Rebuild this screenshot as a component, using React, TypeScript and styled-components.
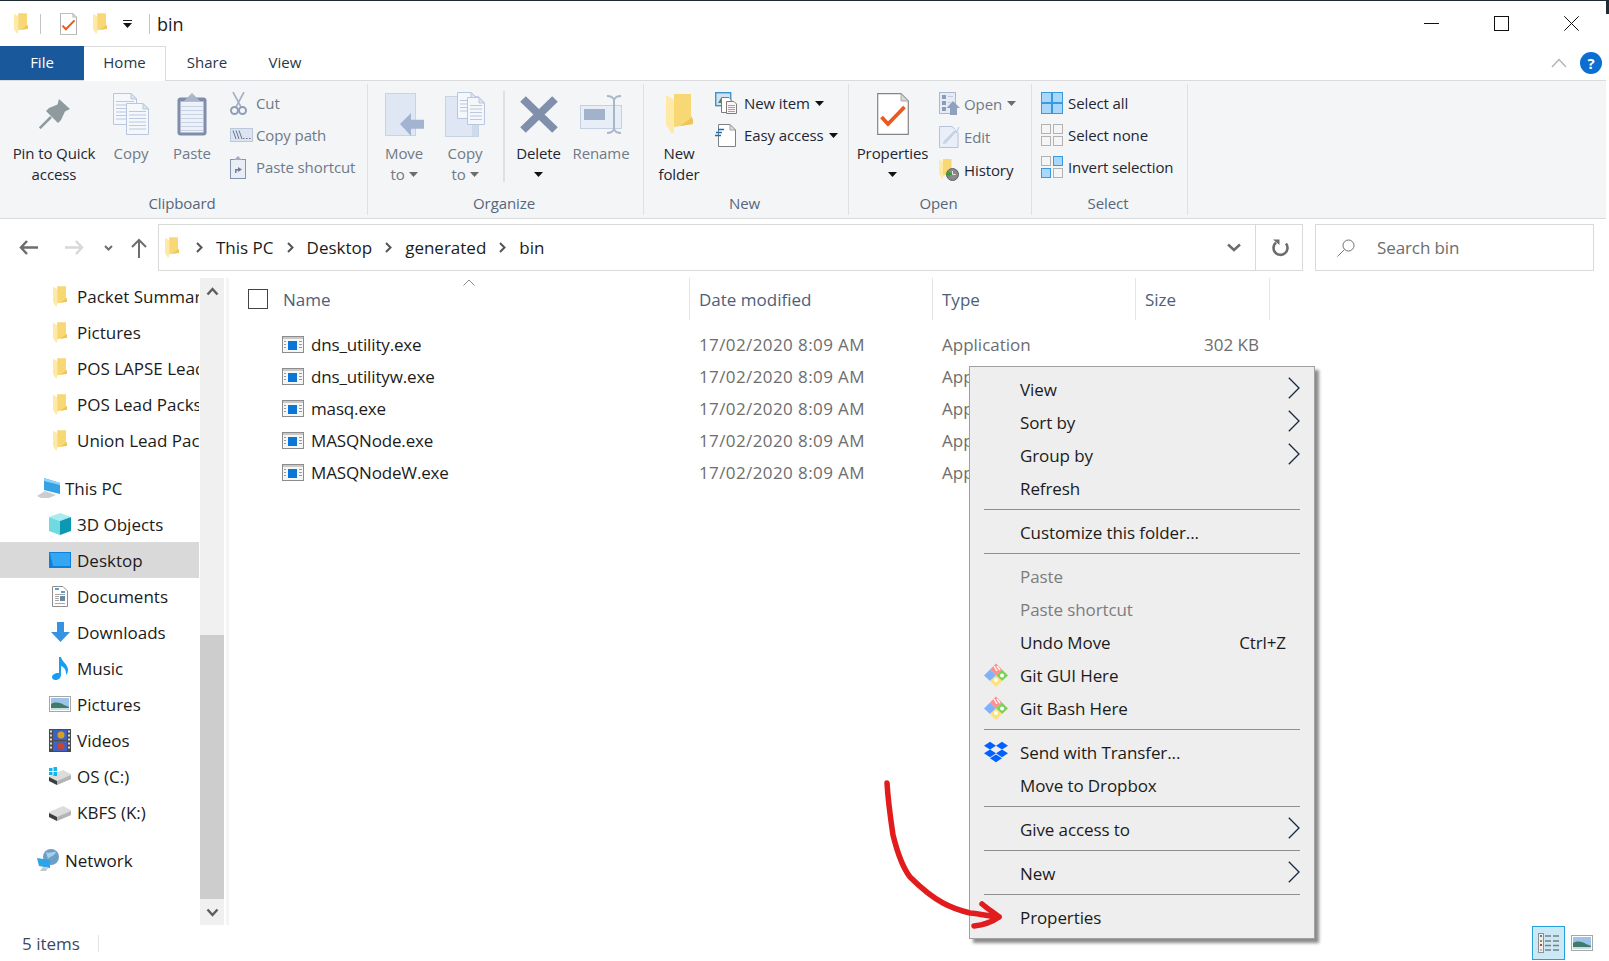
import React, { FC, ReactNode } from "react";
import styled, { createGlobalStyle } from "styled-components";
import { FaDropbox } from "react-icons/fa";

const GlobalStyle = createGlobalStyle`
  html, body {
    margin: 0;
    padding: 0;
    background: #fff;
  }
  body {
    font-family: "Open Sans", "Noto Sans", sans-serif;
    color: #1b1b1b;
    overflow: hidden;
  }
  svg {
    display: block;
    flex: none;
  }
`;

/* ---------- icons ---------- */

const Svg: FC<{ w: number; h: number; vb?: string; children: ReactNode }> = ({ w, h, vb, children }) => (
  <svg width={w} height={h} viewBox={vb || `0 0 ${w} ${h}`} fill="none">
    {children}
  </svg>
);

const Folder: FC<{ w?: number; h?: number }> = ({ w = 14, h = 21 }) => (
  <Svg w={w} h={h} vb="0 0 27 40">
    <path d="M8 0H25V22L27 26V30L8 33Z" fill="#f8d775" />
    <path d="M25 22L27 26V30L14 32L25 24Z" fill="#edc659" />
    <path d="M0 1L8 6V38L6 40L2 34L0 30Z" fill="#ffe9a6" />
  </Svg>
);

const PropsDoc: FC<{ w?: number; h?: number }> = ({ w = 32, h = 42 }) => (
  <Svg w={w} h={h} vb="0 0 32 42">
    <path d="M.7.7H24L31.3 8V41.3H.7Z" fill="#fff" stroke="#858585" strokeWidth="1.2" />
    <path d="M24 .7V8H31.3Z" fill="#d8d8d8" stroke="#a8a8a8" />
    <path d="M4.500 24L11 31L27.500 14" stroke="#ea5a1e" strokeWidth="3.800" />
  </Svg>
);

const PageLines: FC<{ x: number; y: number; w: number; h: number }> = ({ x, y, w, h }) => (
  <g>
    <path d={`M${x + .5} ${y + .5}H${x + w - 6}L${x + w - .5} ${y + 6}V${y + h - .5}H${x + .5}Z`} fill="#f4f7fc" stroke="#b9c6dd" />
    <path d={`M${x + w - 6} ${y + .5}V${y + 6}H${x + w - .5}Z`} fill="#dfe6f2" stroke="#b9c6dd" />
    {Array.from({ length: Math.floor((h - 10) / 3.500) }).map((_, i) => (
      <path key={i} d={`M${x + 3} ${y + 8.500 + i * 3.500}H${x + w - 3}`} stroke="#bcc8de" />
    ))}
  </g>
);

const CopyIcon = () => (
  <Svg w={36} h={42}>
    <PageLines x={0} y={0} w={24} h={32} />
    <PageLines x={13} y={10} w={23} h={32} />
  </Svg>
);

const PasteIcon = () => (
  <Svg w={30} h={43}>
    <rect x=".5" y="4.500" width="29" height="38" rx="3" fill="#7f8cab" />
    <rect x="3.500" y="8.500" width="23" height="31" fill="#eef1f8" />
    {[13, 17, 21, 25, 29, 33, 37].map((y) => (
      <path key={y} d={`M4 ${y}.5H26`} stroke="#c8d2e5" />
    ))}
    <path d="M15 0L23 8H7Z" fill="#aab5ca" />
  </Svg>
);

const CutIcon = () => (
  <Svg w={17} h={23}>
    <path d="M3 0L11 15M14 0L6 15" stroke="#a3afc6" strokeWidth="1.600" />
    <circle cx="4.500" cy="18.500" r="3.500" stroke="#8f9db8" strokeWidth="2" />
    <circle cx="12.500" cy="18.500" r="3.500" stroke="#8f9db8" strokeWidth="2" />
  </Svg>
);

const CopyPathIcon = () => (
  <Svg w={23} h={14}>
    <rect x=".5" y=".5" width="22" height="13" fill="#dbe4f0" stroke="#bcc7d9" />
    <path d="M3 2.500L6 11M6 2.500L9 11M9 2.500L12 11" stroke="#66778e" />
    <path d="M13 10.500h1.500M16 10.500h1.500M19 10.500h1.500" stroke="#66778e" />
  </Svg>
);

const PasteShortcutIcon = () => (
  <Svg w={16} h={23}>
    <rect x=".5" y="3.500" width="15" height="19" fill="#e8edf6" stroke="#8593ae" />
    <path d="M8 0L12 4H4Z" fill="#a4afc4" />
    <path d="M5 17V13H8V11L12 13.500L8 16V14.500H6.500V17Z" fill="#6e7f9b" />
  </Svg>
);

const PinIcon = () => (
  <Svg w={31} h={30}>
    <path d="M20 0L31 10L26 12.500L22 21L19 24L7 12L10 9L18.500 5.500Z" fill="#8e9a9e" />
    <path d="M12 18L.8 29.200" stroke="#8e9a9e" strokeWidth="2.500" />
  </Svg>
);

const MoveIcon = () => (
  <Svg w={39} h={43}>
    <rect x=".5" y=".5" width="30" height="42" fill="#dfe7f4" stroke="#c7d3e6" />
    <path d="M15 31L26 20V26.700H39V35.700H26V43Z" fill="#a2b4d0" />
  </Svg>
);

const CopyToIcon = () => (
  <Svg w={40} h={45}>
    <rect x=".5" y="4.500" width="33" height="40" fill="#dfe7f4" stroke="#c7d3e6" />
    <rect x="27" y="5" width="6" height="39" fill="#cfdaeb" />
    <PageLines x={12} y={0} w={20} h={27} />
    <PageLines x={22} y={5} w={18} h={28} />
  </Svg>
);

const DeleteIcon = () => (
  <Svg w={38} h={37}>
    <path d="M3 3L35 34M35 3L3 34" stroke="#7f8fac" strokeWidth="8" />
  </Svg>
);

const RenameIcon = () => (
  <Svg w={42} h={39}>
    <rect x=".5" y="10.500" width="41" height="23" fill="#e8eef7" stroke="#c5d1e3" />
    <rect x="4" y="14" width="21" height="11" fill="#a3b2cb" />
    <path d="M27 1C31 1 33 2 34 5V34C33 37 31 38 27 38M41 1C37 1 35 2 34 5M34 34C35 37 37 38 41 38" stroke="#a9b6ca" strokeWidth="2" />
  </Svg>
);

const NewItemIcon = () => (
  <Svg w={22} h={22}>
    <rect x=".7" y=".7" width="15" height="13" fill="#cfe3f2" stroke="#3f92cc" strokeWidth="1.400" />
    <path d="M3 11L6 6L9 11Z" fill="#5f7d5a" />
    <path d="M6.500 5.500H14L16 7.500V20.500H6.500Z" fill="#fff" stroke="#7d7d7d" />
    <path d="M11.500 9.500H19L21.500 12V21.500H11.500Z" fill="#fbf5f6" stroke="#7d7d7d" />
    {[13, 15, 17, 19].map((y) => (
      <path key={y} d={`M13 ${y}.5H20`} stroke="#8fa3cf" />
    ))}
  </Svg>
);

const EasyAccessIcon = () => (
  <Svg w={21} h={23}>
    <path d="M3.500.5H15L20.500 6V22.500H3.500Z" fill="#fff" stroke="#808080" />
    <path d="M15 .5V6H20.500Z" fill="#ddd" stroke="#a0a0a0" />
    <path d="M3 5.500H9M1 8.500H7M0 11.500H6" stroke="#1c6fb5" strokeWidth="1.300" />
  </Svg>
);

const OpenIcon = () => (
  <Svg w={21} h={23}>
    <rect x=".5" y=".5" width="16" height="21" fill="#e6ecf6" stroke="#aab8cf" />
    <rect x="3" y="3" width="4" height="4" fill="#8c9cb6" />
    <rect x="3" y="9" width="4" height="4" fill="#8c9cb6" />
    <rect x="3" y="15" width="4" height="4" fill="#8c9cb6" />
    <path d="M9 4.500H14M9 10.500H12" stroke="#c0cbdd" />
    <path d="M14 9L21 16H18V23H11V16H7.500Z" fill="#8fa2bd" />
  </Svg>
);

const EditIcon = () => (
  <Svg w={21} h={22}>
    <path d="M.5.5H13L19 6V21.500H.5Z" fill="#e9eff8" stroke="#b5c2d8" />
    <path d="M3 19L4 15L16 3L19 5L7 18Z" fill="#c9d4e6" stroke="#fff" strokeWidth=".6" />
    <path d="M20 1L17 7" stroke="#b5c2d8" />
  </Svg>
);

const HistoryIcon = () => (
  <Svg w={20} h={22}>
    <g transform="scale(.5)">
      <path d="M8 0H25V22L27 26V30L8 33Z" fill="#f8d775" />
      <path d="M0 1L8 6V38L6 40L2 34L0 30Z" fill="#ffe9a6" />
    </g>
    <circle cx="13.500" cy="15.500" r="6" fill="#8a8a8a" stroke="#5f5f5f" />
    <path d="M13.500 12V15.500H16.500" stroke="#e5e5e5" />
    <path d="M11 12L6.500 15L11 18V16H13V14H11Z" fill="#2ea42e" />
  </Svg>
);

const Panes: FC<{ on: boolean[] }> = ({ on }) => (
  <Svg w={22} h={22}>
    {[
      [0, 0],
      [12, 0],
      [0, 12],
      [12, 12],
    ].map(([x, y], i) => (
      <rect
        key={i}
        x={x + 0.5}
        y={y + 0.5}
        width={9}
        height={9}
        fill={on[i] ? "#a9d8fb" : "#f5f5f5"}
        stroke={on[i] ? "#3a98de" : "#b2b2b2"}
      />
    ))}
  </Svg>
);

const SelectAllIcon = () => (
  <Svg w={22} h={22}>
    <rect x=".5" y=".5" width="21" height="21" fill="#a9d8fb" stroke="#3a98de" />
    <path d="M11 0V22M0 11H22" stroke="#3a98de" strokeWidth="2" />
  </Svg>
);

const Caret: FC<{ muted?: boolean }> = ({ muted }) => (
  <Svg w={9} h={5}>
    <path d="M0 0H9L4.500 5Z" fill={muted ? "#6d6d6d" : "#111"} />
  </Svg>
);

const ExeIcon = () => (
  <Svg w={22} h={17}>
    <rect x=".5" y=".5" width="21" height="16" fill="#f6f6f6" stroke="#8c8c8c" />
    <rect x="1" y="1" width="20" height="2" fill="#c9c9c9" />
    <rect x="6" y="5" width="9" height="9" fill="#0a76d6" />
    <path d="M2 5.500H4M2 8.500H4M2 11.500H4M17 5.500H20M17 8.500H20M17 11.500H20" stroke="#8f9aa6" />
  </Svg>
);

const DriveBase = () => (
  <g>
    <path d="M0 9L14 3L22 7V12L8 18L0 14Z" fill="#dcdcdc" />
    <path d="M0 10L8 14V18L0 14Z" fill="#3e3e3e" />
    <path d="M8 14L22 8V12L8 18Z" fill="#b4b4b4" />
  </g>
);

const NavIcons: Record<string, ReactNode> = {
  folder: <Folder />,
  pc: (
    <Svg w={23} h={20}>
      <path d="M7 0L23 5V16L7 12Z" fill="#35a2e6" />
      <path d="M7 0L23 5V7L7 3Z" fill="#8ed3f8" />
      <path d="M0 18L8 13L19 17L12 20H4Z" fill="#c8ced4" />
    </Svg>
  ),
  cube: (
    <Svg w={22} h={22}>
      <path d="M11 0L22 4L11 8L0 4Z" fill="#a8ecf2" />
      <path d="M0 4L11 8V22L0 18Z" fill="#6fdadf" />
      <path d="M22 4L11 8V22L22 18Z" fill="#0c98b2" />
    </Svg>
  ),
  desktop: (
    <Svg w={22} h={16}>
      <rect width="22" height="16" fill="#0f7fd8" />
      <path d="M1 1H21V14H4Z" fill="#35a6f2" />
    </Svg>
  ),
  docs: (
    <Svg w={16} h={21}>
      <path d="M.5.5H11L15.500 5V20.500H.5Z" fill="#fff" stroke="#8f8f8f" />
      <path d="M3 3H7M9 6H13" stroke="#2a7fc9" strokeWidth="1.500" />
      <path d="M3 8.500H13M3 17.500H13" stroke="#a8a8a8" />
      <rect x="8" y="10" width="5" height="5" fill="#6c879c" />
      <path d="M3 10.500H7M3 12.500H7M3 14.500H7" stroke="#a8a8a8" />
    </Svg>
  ),
  down: (
    <Svg w={19} h={20}>
      <path d="M6 0H13V10H19L9.500 20L0 10H6Z" fill="#3593e4" />
    </Svg>
  ),
  music: (
    <Svg w={17} h={23}>
      <path d="M7 0H9C10 5 16 7 16 13C16 15 15 17 14 18C14.500 13 12 10 9 9V18C9 21 6 23 3.500 23C1.500 23 0 22 0 20C0 17.500 4 15.500 7 16Z" fill="#1a9df0" />
    </Svg>
  ),
  pictures: (
    <Svg w={22} h={16}>
      <rect x=".5" y=".5" width="21" height="15" fill="#fff" stroke="#a6a6a6" />
      <rect x="2" y="2" width="18" height="12" fill="#9cc4e8" />
      <path d="M2 8C7 5 12 7 15 9L20 11V14H2Z" fill="#3f7a6a" />
      <path d="M2 12H20V14H2Z" fill="#c8dde4" />
    </Svg>
  ),
  videos: (
    <Svg w={22} h={23}>
      <rect width="22" height="23" fill="#4a4a4a" />
      <rect x="4" y="1" width="14" height="10" fill="#3d62c6" />
      <rect x="4" y="12" width="14" height="10" fill="#3d62c6" />
      <circle cx="12" cy="6" r="3.500" fill="#d8a01e" />
      <circle cx="12" cy="17" r="3.500" fill="#c9442e" />
      <path d="M1 2.500H3M1 6.500H3M1 10.500H3M1 14.500H3M1 18.500H3M19 2.500H21M19 6.500H21M19 10.500H21M19 14.500H21M19 18.500H21" stroke="#ddd" strokeWidth="2" />
    </Svg>
  ),
  os: (
    <Svg w={22} h={18}>
      <DriveBase />
      <path d="M0 1H3.500V4H0ZM4.500 0H8V4H4.500ZM0 5H3.500V8H0ZM4.500 5H8V9H4.500Z" fill="#12b4ef" />
    </Svg>
  ),
  drive: (
    <Svg w={22} h={18}>
      <DriveBase />
    </Svg>
  ),
  network: (
    <Svg w={23} h={22}>
      <circle cx="14" cy="8" r="8" fill="#6a9fc6" />
      <path d="M9 3C12 5 16 2 19 3C17 8 13 7 11 10Z" fill="#a8cfe8" />
      <path d="M0 9L13 11V19L2 17Z" fill="#2ea3e8" />
      <path d="M3 22L6 18L11 19L9 22Z" fill="#bfc7cf" />
    </Svg>
  ),
};

const GitIcon = () => (
  <Svg w={24} h={24}>
    <path d="M12 .5L18 6.500L12 12.500L6 6.500Z" fill="#ff8f8f" />
    <path d="M6 6.500L12 12.500L6 18L0 12.500Z" fill="#7fb2fb" />
    <path d="M18 6.500L24 12.500L18 18L12 12.500Z" fill="#7fd05a" />
    <path d="M12 12.500L18 18L12 24L6 18Z" fill="#fde27a" />
    <path d="M10 3L13 8M13 3L16 7" stroke="#fff" strokeWidth="1.400" />
    <circle cx="18" cy="12.500" r="2" fill="#fff" />
    <circle cx="12" cy="17" r="2" fill="#fff" />
  </Svg>
);

const SubChevron = () => (
  <Svg w={12} h={22}>
    <path d="M.8.8L11 11L.8 21.200" stroke="#16283c" strokeWidth="1.300" />
  </Svg>
);

const Crumb = () => (
  <Svg w={7} h={11}>
    <path d="M1 1L5.500 5.500L1 10" stroke="#555" strokeWidth="2" />
  </Svg>
);

/* ---------- title bar ---------- */

const Page = styled.div`
  position: relative;
  width: 1609px;
  height: 961px;
  display: flex;
  overflow: hidden;
`;

const Edge = styled.div`
  width: 3px;
  &::before {
    content: "";
    display: block;
    height: 14px;
    background: #202b33;
  }
`;

const Win = styled.div`
  width: 1606px;
  height: 961px;
  display: flex;
  flex-direction: column;
`;

const TitleBar = styled.div`
  height: 45px;
  border-top: 1px solid #202b33;
  display: flex;
  align-items: center;
  padding: 0 27px 0 14px;
`;

const TitleSep = styled.div<{ $left: number; $right: number }>`
  width: 1px;
  height: 20px;
  background: #c4c4c4;
  margin: 0 ${(p) => p.$right}px 0 ${(p) => p.$left}px;
`;

const QuickDrop = styled.div`
  margin-left: 16px;
  display: flex;
  flex-direction: column;
  gap: 2px;
  &::before {
    content: "";
    height: 1px;
    background: #222;
  }
`;

const TitleText = styled.div`
  font-size: 18px;
  margin-left: 7px;
`;

const WinButtons = styled.div`
  margin-left: auto;
  display: flex;
  align-items: center;
  gap: 55px;
`;

/* ---------- tabs ---------- */

const TabRow = styled.div`
  height: 34px;
  border-bottom: 1px solid #dadbdc;
  display: flex;
  align-items: stretch;
`;

const Tab = styled.div<{ $w: number; $kind?: "file" | "active" }>`
  width: ${(p) => p.$w}px;
  height: ${(p) => (p.$kind === "active" ? 35 : 34)}px;
  padding-bottom: ${(p) => (p.$kind === "active" ? 4 : 2)}px;
  box-sizing: border-box;
  display: flex;
  align-items: center;
  justify-content: center;
  font-size: 15px;
  color: ${(p) => (p.$kind === "file" ? "#fff" : "#27384a")};
  background: ${(p) => (p.$kind === "file" ? "#19589b" : p.$kind === "active" ? "#fff" : "transparent")};
  border-top: ${(p) => (p.$kind === "active" ? "1px solid #dadbdc" : "none")};
  border-right: ${(p) => (p.$kind === "active" ? "1px solid #dadbdc" : "none")};
`;

const TabTools = styled.div`
  margin-left: auto;
  display: flex;
  align-items: center;
  gap: 13px;
  padding-right: 4px;
`;

const Help = styled.div`
  width: 22px;
  height: 22px;
  border-radius: 50%;
  background: #0b6fd0;
  color: #fff;
  font-size: 15px;
  font-weight: 700;
  display: flex;
  align-items: center;
  justify-content: center;
`;

/* ---------- ribbon ---------- */

const Ribbon = styled.div`
  height: 131px;
  padding: 3px 0;
  background: #f4f5f7;
  border-bottom: 1px solid #d9dadb;
  display: flex;
  letter-spacing: -0.1px;
`;

const Group = styled.div<{ $w: number }>`
  width: ${(p) => p.$w}px;
  height: 131px;
  box-sizing: border-box;
  border-right: 1px solid #dfe0e2;
  display: flex;
  flex-direction: column;
`;

const GroupBody = styled.div`
  height: 111px;
  display: flex;
  align-items: flex-start;
`;

const GroupLabel = styled.div`
  height: 20px;
  line-height: 16px;
  padding-right: 3px;
  text-align: center;
  font-size: 15px;
  color: #56677a;
`;

const BigButton = styled.div<{ $w: number; $off?: boolean }>`
  width: ${(p) => p.$w}px;
  flex: none;
  display: flex;
  flex-direction: column;
  align-items: center;
  font-size: 15px;
  line-height: 21px;
  text-align: center;
  color: ${(p) => (p.$off ? "#6f7a86" : "#1d2733")};
`;

const BigIcon = styled.div`
  height: 60px;
  margin-bottom: -1px;
  display: flex;
  align-items: center;
  justify-content: center;
`;

const CaretLine = styled.div`
  display: flex;
  align-items: center;
  justify-content: center;
  gap: 4px;
  height: 21px;
`;

const InnerSep = styled.div`
  width: 2px;
  height: 91px;
  margin: 7px 0 0 13px;
  background: #dfe0e2;
  flex: none;
`;

const SmallCol = styled.div<{ $iconW: number; $step: number; $left?: number }>`
  display: flex;
  flex-direction: column;
  padding: 3px 0 0 ${(p) => p.$left || 0}px;
  --icon-w: ${(p) => p.$iconW}px;
  --step: ${(p) => p.$step}px;
`;

const SmallRow = styled.div<{ $off?: boolean }>`
  height: var(--step);
  display: flex;
  align-items: center;
  font-size: 15px;
  white-space: nowrap;
  color: ${(p) => (p.$off ? "#6f7a86" : "#1d2733")};
`;

const SmallIcon = styled.div`
  width: var(--icon-w);
  flex: none;
`;

const InlineCaret = styled.span`
  margin-left: 5px;
`;

/* ---------- address row ---------- */

const AddressRow = styled.div`
  height: 54px;
  padding-top: 5px;
  display: flex;
  align-items: flex-start;
`;

const Arrows = styled.div`
  width: 139px;
  height: 47px;
  padding-left: 19px;
  display: flex;
  align-items: center;
`;

const AddressBox = styled.div`
  width: 1145px;
  height: 47px;
  box-sizing: border-box;
  border: 1px solid #d9d9d9;
  padding-left: 6px;
  display: flex;
  align-items: center;
  font-size: 17px;
  color: #1b1b1b;
`;

const CrumbItem = styled.div`
  display: flex;
  align-items: center;
  gap: 13px;
  margin-left: 13px;
`;

const FirstCrumb = styled(CrumbItem)`
  margin-left: 17px;
`;

const BoxEnd = styled.div`
  margin-left: auto;
  display: flex;
  align-items: center;
  height: 100%;
`;

const RefreshCell = styled.div`
  width: 47px;
  height: 100%;
  margin-left: 14px;
  padding-left: 2px;
  box-sizing: border-box;
  border-left: 1px solid #d9d9d9;
  display: flex;
  align-items: center;
  justify-content: center;
`;

const SearchBox = styled.div`
  width: 279px;
  height: 47px;
  box-sizing: border-box;
  margin-left: 12px;
  border: 1px solid #d9d9d9;
  padding-left: 21px;
  display: flex;
  align-items: center;
  gap: 22px;
  font-size: 17px;
  letter-spacing: -0.1px;
  color: #6d6d6d;
`;

const ArrowGap = styled.div<{ $w: number }>`
  width: ${(p) => p.$w}px;
  flex: none;
`;

/* ---------- main area ---------- */

const Main = styled.div`
  height: 647px;
  display: flex;
`;

const Nav = styled.div`
  width: 199px;
  margin-right: 1px;
  overflow: hidden;
`;

const NavRow = styled.div<{ $root?: boolean; $selected?: boolean; $gap?: number }>`
  height: 36px;
  margin-top: ${(p) => p.$gap || 0}px;
  padding-left: ${(p) => (p.$root ? 37 : 49)}px;
  display: flex;
  align-items: center;
  font-size: 17px;
  white-space: nowrap;
  background: ${(p) => (p.$selected ? "#d9d9d9" : "transparent")};
`;

const NavIcon = styled.div<{ $root?: boolean }>`
  width: 28px;
  flex: none;
  display: flex;
  justify-content: ${(p) => (p.$root ? "flex-start" : "center")};
  padding-right: ${(p) => (p.$root ? 0 : 6)}px;
  box-sizing: border-box;
`;

const ScrollBar = styled.div`
  width: 24px;
  background: #f0f0f0;
  display: flex;
  flex-direction: column;
`;

const ScrollUp = styled.div`
  height: 357px;
  padding-top: 9px;
  box-sizing: border-box;
  display: flex;
  justify-content: center;
`;

const ScrollThumb = styled.div`
  height: 264px;
  background: #cdcdcd;
`;

const ScrollDown = styled.div`
  height: 26px;
  display: flex;
  align-items: center;
  justify-content: center;
`;

const Gutter = styled.div`
  width: 3px;
  margin-left: 2px;
  background: #f5f5f5;
`;

const Content = styled.div`
  position: relative;
  flex: 1;
`;

const Columns = "461px 243px 203px 134px";

const Header = styled.div`
  display: grid;
  grid-template-columns: ${Columns};
  height: 42px;
  margin-bottom: 10px;
`;

const HeadCell = styled.div<{ $pad: number }>`
  padding-left: ${(p) => p.$pad}px;
  border-right: 1px solid #e5e5e5;
  display: flex;
  align-items: center;
  gap: 15px;
  font-size: 17px;
  color: #4c607a;
`;

const CheckBox = styled.div`
  width: 20px;
  height: 20px;
  box-sizing: border-box;
  border: 1px solid #444;
`;

const SortCaret = styled.div`
  position: absolute;
  left: 234px;
  top: 1px;
`;

const FileRow = styled.div`
  display: grid;
  grid-template-columns: ${Columns};
  height: 32px;
  box-sizing: border-box;
  padding-bottom: 3px;
  align-items: center;
  font-size: 17px;
  color: #6d6d6d;
`;

const FileName = styled.div`
  padding-left: 53px;
  display: flex;
  align-items: center;
  gap: 7px;
  letter-spacing: -0.15px;
  color: #1b1b1b;
`;

const FileCell = styled.div<{ $pad: number; $right?: boolean; $wide?: boolean }>`
  padding: 0 11px 0 ${(p) => p.$pad}px;
  text-align: ${(p) => (p.$right ? "right" : "left")};
  letter-spacing: ${(p) => (p.$wide ? 0.4 : 0)}px;
`;

/* ---------- status bar ---------- */

const Status = styled.div`
  height: 36px;
  padding: 0 13px 0 22px;
  box-sizing: border-box;
  display: flex;
  align-items: center;
  font-size: 17px;
  color: #3c4a5e;
`;

const StatusSep = styled.div`
  width: 1px;
  height: 17px;
  margin-left: 18px;
  background: #e3e3e3;
`;

const ViewButtons = styled.div`
  margin-left: auto;
  display: flex;
  align-items: center;
  gap: 6px;
`;

const ListView = styled.div`
  width: 33px;
  height: 34px;
  box-sizing: border-box;
  border: 1px solid #26a0da;
  background: #cbe8f6;
  display: flex;
  align-items: center;
  justify-content: center;
`;

/* ---------- context menu ---------- */

const Menu = styled.div`
  position: absolute;
  left: 969px;
  top: 366px;
  width: 346px;
  box-sizing: border-box;
  padding: 7px 0 3px;
  background: #eeeeee;
  border: 1px solid #a0a0a0;
  box-shadow: 4px 4px 3px rgba(0, 0, 0, 0.45);
  color: #1b1b1b;
`;

const MenuRow = styled.div<{ $off?: boolean }>`
  height: 33px;
  box-sizing: border-box;
  padding: 0 14px 2px;
  display: flex;
  align-items: center;
  font-size: 17px;
  letter-spacing: -0.1px;
  color: ${(p) => (p.$off ? "#7d7d7d" : "#1b1b1b")};
`;

const MenuIcon = styled.div`
  width: 36px;
  margin-bottom: 2px;
  flex: none;
  color: #0061fe;
`;

const MenuEnd = styled.div`
  margin-left: auto;
  margin-bottom: 3px;
`;

const ShortcutEnd = styled.div`
  margin-left: auto;
  margin-right: 14px;
`;

const MenuSep = styled.div`
  height: 1px;
  margin: 3px 14px 7px;
  background: #8f8f8f;
`;

const RedArrow = styled.svg`
  position: absolute;
  left: 870px;
  top: 770px;
`;

/* ---------- data ---------- */

const navItems = [
  { icon: "folder", text: "Packet Summary" },
  { icon: "folder", text: "Pictures" },
  { icon: "folder", text: "POS LAPSE Leads" },
  { icon: "folder", text: "POS Lead Packs" },
  { icon: "folder", text: "Union Lead Packs" },
  { icon: "pc", text: "This PC", root: true, gap: 12 },
  { icon: "cube", text: "3D Objects" },
  { icon: "desktop", text: "Desktop", selected: true },
  { icon: "docs", text: "Documents" },
  { icon: "down", text: "Downloads" },
  { icon: "music", text: "Music" },
  { icon: "pictures", text: "Pictures" },
  { icon: "videos", text: "Videos" },
  { icon: "os", text: "OS (C:)" },
  { icon: "drive", text: "KBFS (K:)" },
  { icon: "network", text: "Network", root: true, gap: 12 },
];

const files = [
  { name: "dns_utility.exe", size: "302 KB" },
  { name: "dns_utilityw.exe", size: "" },
  { name: "masq.exe", size: "" },
  { name: "MASQNode.exe", size: "" },
  { name: "MASQNodeW.exe", size: "" },
];

const App: FC = () => {
  return (
    <Page>
      <GlobalStyle />
      <Win>
        <TitleBar>
          <Folder />
          <TitleSep $left={12} $right={19} />
          <PropsDoc w={17} h={22} />
          <ArrowGap $w={16} />
          <Folder />
          <QuickDrop>
            <Caret />
          </QuickDrop>
          <TitleSep $left={17} $right={0} />
          <TitleText>bin</TitleText>
          <WinButtons>
            <Svg w={15} h={15}>
              <path d="M0 7.500H15" stroke="#111" />
            </Svg>
            <Svg w={15} h={15}>
              <rect x=".5" y=".5" width="14" height="14" stroke="#111" />
            </Svg>
            <Svg w={15} h={15}>
              <path d="M.3.3L14.700 14.700M14.700.3L.3 14.700" stroke="#111" />
            </Svg>
          </WinButtons>
        </TitleBar>

        <TabRow>
          <Tab $w={84} $kind="file">File</Tab>
          <Tab $w={82} $kind="active">Home</Tab>
          <Tab $w={82}>Share</Tab>
          <Tab $w={74}>View</Tab>
          <TabTools>
            <Svg w={16} h={10}>
              <path d="M1 9L8 1.500L15 9" stroke="#b5b5b5" strokeWidth="1.500" />
            </Svg>
            <Help>?</Help>
          </TabTools>
        </TabRow>

        <Ribbon>
          <Group $w={368}>
            <GroupBody>
              <BigButton $w={108}>
                <BigIcon><PinIcon /></BigIcon>
                Pin to Quick
                <br />
                access
              </BigButton>
              <BigButton $w={46} $off>
                <BigIcon><CopyIcon /></BigIcon>
                Copy
              </BigButton>
              <BigButton $w={76} $off>
                <BigIcon><PasteIcon /></BigIcon>
                Paste
              </BigButton>
              <SmallCol $iconW={26} $step={32}>
                <SmallRow $off><SmallIcon><CutIcon /></SmallIcon>Cut</SmallRow>
                <SmallRow $off><SmallIcon><CopyPathIcon /></SmallIcon>Copy path</SmallRow>
                <SmallRow $off><SmallIcon><PasteShortcutIcon /></SmallIcon>Paste shortcut</SmallRow>
              </SmallCol>
            </GroupBody>
            <GroupLabel>Clipboard</GroupLabel>
          </Group>

          <Group $w={276}>
            <GroupBody>
              <BigButton $w={72} $off>
                <BigIcon><MoveIcon /></BigIcon>
                Move
                <CaretLine>to <Caret muted /></CaretLine>
              </BigButton>
              <BigButton $w={50} $off>
                <BigIcon><CopyToIcon /></BigIcon>
                Copy
                <CaretLine>to <Caret muted /></CaretLine>
              </BigButton>
              <InnerSep />
              <BigButton $w={67}>
                <BigIcon><DeleteIcon /></BigIcon>
                Delete
                <CaretLine><Caret /></CaretLine>
              </BigButton>
              <BigButton $w={58} $off>
                <BigIcon><RenameIcon /></BigIcon>
                Rename
              </BigButton>
            </GroupBody>
            <GroupLabel>Organize</GroupLabel>
          </Group>

          <Group $w={205}>
            <GroupBody>
              <BigButton $w={70}>
                <BigIcon><Folder w={27} h={40} /></BigIcon>
                New
                <br />
                folder
              </BigButton>
              <SmallCol $iconW={29} $step={32} $left={1}>
                <SmallRow><SmallIcon><NewItemIcon /></SmallIcon>New item<InlineCaret><Caret /></InlineCaret></SmallRow>
                <SmallRow><SmallIcon><EasyAccessIcon /></SmallIcon>Easy access<InlineCaret><Caret /></InlineCaret></SmallRow>
              </SmallCol>
            </GroupBody>
            <GroupLabel>New</GroupLabel>
          </Group>

          <Group $w={183}>
            <GroupBody>
              <BigButton $w={87}>
                <BigIcon><PropsDoc /></BigIcon>
                Properties
                <CaretLine><Caret /></CaretLine>
              </BigButton>
              <SmallCol $iconW={25} $step={33} $left={3}>
                <SmallRow $off><SmallIcon><OpenIcon /></SmallIcon>Open<InlineCaret><Caret muted /></InlineCaret></SmallRow>
                <SmallRow $off><SmallIcon><EditIcon /></SmallIcon>Edit</SmallRow>
                <SmallRow><SmallIcon><HistoryIcon /></SmallIcon>History</SmallRow>
              </SmallCol>
            </GroupBody>
            <GroupLabel>Open</GroupLabel>
          </Group>

          <Group $w={156}>
            <GroupBody>
              <SmallCol $iconW={27} $step={32} $left={9}>
                <SmallRow><SmallIcon><SelectAllIcon /></SmallIcon>Select all</SmallRow>
                <SmallRow><SmallIcon><Panes on={[false, false, false, false]} /></SmallIcon>Select none</SmallRow>
                <SmallRow><SmallIcon><Panes on={[false, true, true, false]} /></SmallIcon>Invert selection</SmallRow>
              </SmallCol>
            </GroupBody>
            <GroupLabel>Select</GroupLabel>
          </Group>
        </Ribbon>

        <AddressRow>
          <Arrows>
            <Svg w={19} h={15}>
              <path d="M19 7.500H2M8 1L2 7.500L8 14" stroke="#6d6d6d" strokeWidth="2.500" />
            </Svg>
            <ArrowGap $w={27} />
            <Svg w={19} h={15}>
              <path d="M0 7.500H17M11 1L17 7.500L11 14" stroke="#d8d8d8" strokeWidth="2.500" />
            </Svg>
            <ArrowGap $w={20} />
            <Svg w={9} h={6}>
              <path d="M1 1L4.500 4.500L8 1" stroke="#6d6d6d" strokeWidth="2" />
            </Svg>
            <ArrowGap $w={18} />
            <Svg w={16} h={20}>
              <path d="M8 20V2M1 9L8 2L15 9" stroke="#6d6d6d" strokeWidth="2" />
            </Svg>
          </Arrows>
          <AddressBox>
            <Folder />
            <FirstCrumb><Crumb />This PC</FirstCrumb>
            <CrumbItem><Crumb />Desktop</CrumbItem>
            <CrumbItem><Crumb />generated</CrumbItem>
            <CrumbItem><Crumb />bin</CrumbItem>
            <BoxEnd>
              <Svg w={14} h={9}>
                <path d="M1 1.500L7 7L13 1.500" stroke="#6d6d6d" strokeWidth="2.500" />
              </Svg>
              <RefreshCell>
                <Svg w={17} h={18}>
                  <path d="M14 4.500A7 7 0 1 1 4 3.500" stroke="#6d6d6d" strokeWidth="2.600" />
                  <path d="M1 .5H7.500V6Z" fill="#6d6d6d" />
                </Svg>
              </RefreshCell>
            </BoxEnd>
          </AddressBox>
          <SearchBox>
            <Svg w={18} h={18}>
              <circle cx="11.500" cy="6.500" r="5.500" stroke="#6d6d6d" />
              <path d="M7.500 10.500L.5 17.500" stroke="#7a7a7a" />
            </Svg>
            Search bin
          </SearchBox>
        </AddressRow>

        <Main>
          <Nav>
            {navItems.map((n, i) => (
              <NavRow key={i} $root={n.root} $selected={n.selected} $gap={n.gap}>
                <NavIcon $root={n.root}>{NavIcons[n.icon]}</NavIcon>
                {n.text}
              </NavRow>
            ))}
          </Nav>
          <ScrollBar>
            <ScrollUp>
              <Svg w={13} h={9}>
                <path d="M1.500 7.500L6.500 2L11.500 7.500" stroke="#606060" strokeWidth="2.500" />
              </Svg>
            </ScrollUp>
            <ScrollThumb />
            <ScrollDown>
              <Svg w={13} h={9}>
                <path d="M1.500 1.500L6.500 7L11.500 1.500" stroke="#606060" strokeWidth="2.500" />
              </Svg>
            </ScrollDown>
          </ScrollBar>
          <Gutter />
          <Content>
            <SortCaret>
              <Svg w={12} h={7}>
                <path d="M.5 6.500L6 1L11.500 6.500" stroke="#8a8a8a" />
              </Svg>
            </SortCaret>
            <Header>
              <HeadCell $pad={19}><CheckBox />Name</HeadCell>
              <HeadCell $pad={9}>Date modified</HeadCell>
              <HeadCell $pad={9}>Type</HeadCell>
              <HeadCell $pad={9}>Size</HeadCell>
            </Header>
            {files.map((f) => (
              <FileRow key={f.name}>
                <FileName><ExeIcon />{f.name}</FileName>
                <FileCell $pad={9} $wide>17/02/2020 8:09 AM</FileCell>
                <FileCell $pad={9}>Application</FileCell>
                <FileCell $pad={9} $right>{f.size}</FileCell>
              </FileRow>
            ))}
          </Content>
        </Main>

        <Status>
          5 items
          <StatusSep />
          <ViewButtons>
            <ListView>
              <Svg w={21} h={20}>
                <rect x=".5" y=".5" width="5" height="19" fill="#eee" stroke="#8f8f8f" />
                <rect x="2" y="2" width="2" height="2" fill="#5e7f9c" />
                <rect x="2" y="7" width="2" height="2" fill="#9a8f3c" />
                <rect x="2" y="11" width="2" height="2" fill="#b5482e" />
                <rect x="2" y="16" width="2" height="2" fill="#bbb" />
                <path d="M7 3H13M15 3H21M7 8H13M15 8H21M7 12.500H13M15 12.500H21M7 17H13M15 17H21" stroke="#7d7d7d" strokeWidth="1.300" />
              </Svg>
            </ListView>
            {NavIcons.pictures}
          </ViewButtons>
        </Status>
      </Win>
      <Edge />

      <Menu>
        <MenuRow><MenuIcon />View<MenuEnd><SubChevron /></MenuEnd></MenuRow>
        <MenuRow><MenuIcon />Sort by<MenuEnd><SubChevron /></MenuEnd></MenuRow>
        <MenuRow><MenuIcon />Group by<MenuEnd><SubChevron /></MenuEnd></MenuRow>
        <MenuRow><MenuIcon />Refresh</MenuRow>
        <MenuSep />
        <MenuRow><MenuIcon />Customize this folder...</MenuRow>
        <MenuSep />
        <MenuRow $off><MenuIcon />Paste</MenuRow>
        <MenuRow $off><MenuIcon />Paste shortcut</MenuRow>
        <MenuRow><MenuIcon />Undo Move<ShortcutEnd>Ctrl+Z</ShortcutEnd></MenuRow>
        <MenuRow><MenuIcon><GitIcon /></MenuIcon>Git GUI Here</MenuRow>
        <MenuRow><MenuIcon><GitIcon /></MenuIcon>Git Bash Here</MenuRow>
        <MenuSep />
        <MenuRow><MenuIcon><FaDropbox size={24} /></MenuIcon>Send with Transfer...</MenuRow>
        <MenuRow><MenuIcon />Move to Dropbox</MenuRow>
        <MenuSep />
        <MenuRow><MenuIcon />Give access to<MenuEnd><SubChevron /></MenuEnd></MenuRow>
        <MenuSep />
        <MenuRow><MenuIcon />New<MenuEnd><SubChevron /></MenuEnd></MenuRow>
        <MenuSep />
        <MenuRow><MenuIcon />Properties</MenuRow>
      </Menu>

      <RedArrow width="140" height="170" viewBox="870 770 140 170" fill="none">
        <path
          d="M887 783C888 800 890 815 893 835C898 855 903 868 910 877C922 889 932 897 943 903C952 908 962 911 970 913C980 914 990 916 999 917"
          stroke="#e21c1c"
          strokeWidth="5.500"
          strokeLinecap="round"
        />
        <path d="M982 904C988 909 994 913 999 917C992 922 983 925 974 926" stroke="#e21c1c" strokeWidth="5.500" strokeLinecap="round" strokeLinejoin="round" />
      </RedArrow>
    </Page>
  );
};

export default App;
